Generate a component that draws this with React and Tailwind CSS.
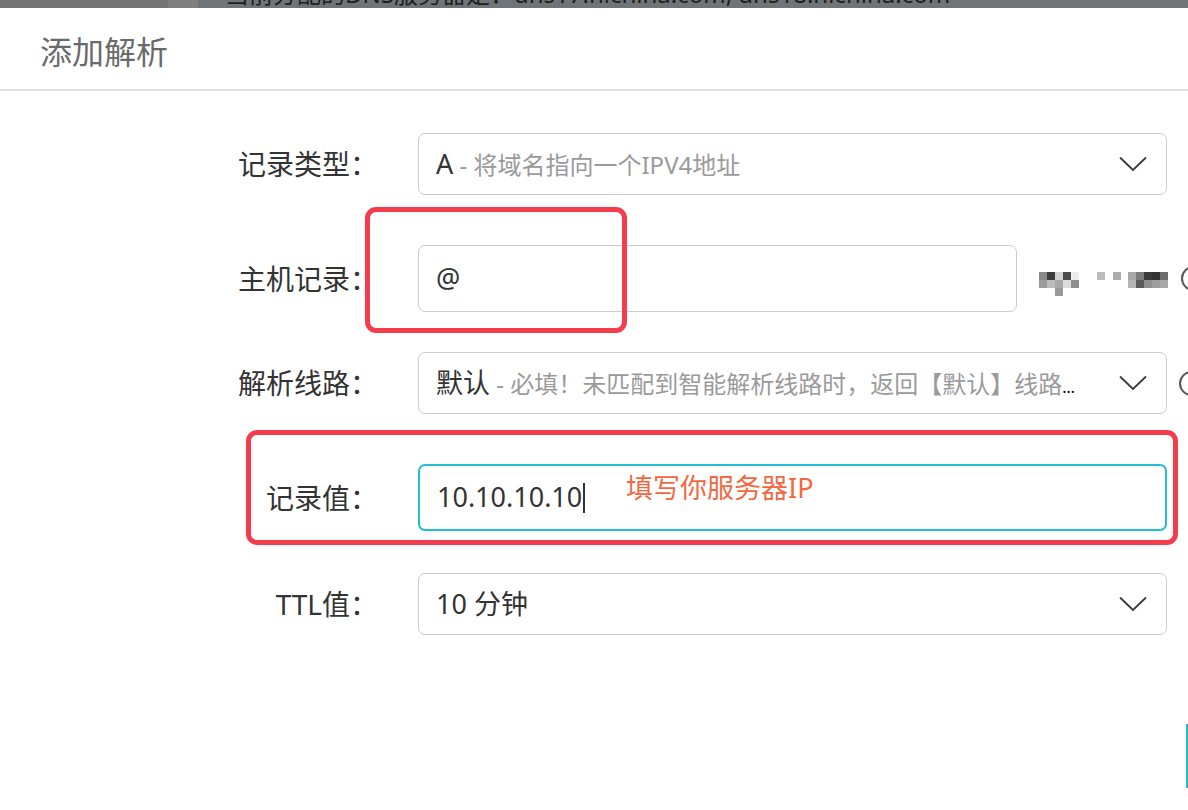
import React from "react";

const FONT = "font-['Noto_Sans','Noto_Sans_CJK_SC',sans-serif]";

function Chevron() {
  return (
    <svg width="28" height="16" viewBox="0 0 28 16" className="shrink-0">
      <polyline points="1,1.5 14,14 27,1.5" fill="none" stroke="#3a3a3a" strokeWidth="1.8" />
    </svg>
  );
}

function Mosaic() {
  const cells = [
    [0, 0, "#8a8a8a"], [8, 0, "#3c3c3c"], [16, 0, "#d2d2d2"], [24, 0, "#4a4a4a"], [32, 0, "#ececec"],
    [0, 8, "#9b9b9b"], [8, 8, "#bdbdbd"], [16, 8, "#a8a8a8"], [24, 8, "#dcdcdc"], [32, 8, "#8e8e8e"],
    [16, 16, "#9a9a9a"],
    [58, 0, "#bcbcbc"], [74, 0, "#ababab"],
    [89, 0, "#a9a9a9"], [97, 0, "#7a7a7a"], [105, 0, "#3a3a3a"], [113, 0, "#333333"], [121, 0, "#6c6c6c"],
    [89, 8, "#b5b5b5"], [97, 8, "#5c5c5c"], [105, 8, "#8f8f8f"], [113, 8, "#9e9e9e"], [121, 8, "#a8a8a8"],
  ];
  return (
    <svg width="130" height="24" viewBox="0 0 130 24" className="shrink-0">
      {cells.map(([x, y, c], i) => (
        <rect key={i} x={x} y={y} width="8" height="8" fill={c} />
      ))}
    </svg>
  );
}

function HelpCircle({ className = "" }) {
  return (
    <div className={"h-[25px] w-[25px] shrink-0 rounded-full border-2 border-[#555] " + className} />
  );
}

function Label({ children }) {
  return (
    <div className="w-[378px] shrink-0 whitespace-nowrap text-right text-[28px] leading-[36px] text-[#333]">{children}</div>
  );
}

export default function App() {
  return (
    <div className={"relative h-[810px] w-[1188px] overflow-hidden bg-white " + FONT}>
      {/* background strip */}
      <div className="flex h-[8px] overflow-hidden">
        <div className="w-[168px] bg-[#737373]" />
        <div className="w-[30px] bg-[#7f7f7f]" />
        <div className="min-w-0 flex-1 bg-[#6f7479] pl-[27px]">
          <div className="-mt-[18px] whitespace-nowrap text-[24px] leading-[24px] text-[#1e1e1e]">
            当前分配的DNS服务器是：dns17.hichina.com, dns18.hichina.com
          </div>
        </div>
      </div>

      {/* header */}
      <div className="flex h-[83px] items-center border-b-2 border-[#e2e2e2] pl-[40px] pt-[7px]">
        <div className="text-[32px] leading-[40px] text-[#6a6a6a]">添加解析</div>
      </div>

      {/* form */}
      <div className="flex flex-col pt-[42px]">
        <div className="flex items-center">
          <Label>记录类型：</Label>
          <div className="ml-[40px] flex h-[62px] w-[749px] shrink-0 items-center justify-between rounded-[7px] border-[1.5px] border-[#cbcbcb] pl-[17px] pr-[19px]">
            <div className="whitespace-nowrap">
              <span className="text-[27px] text-[#333]">A</span>
              <span className="text-[24px] text-[#9a9a9a]"> - 将域名指向一个IPV4地址</span>
            </div>
            <Chevron />
          </div>
        </div>

        <div className="mt-[50px] flex items-center">
          <Label>主机记录：</Label>
          <div className="ml-[40px] flex h-[67px] w-[599px] shrink-0 items-center rounded-[7px] border-[1.5px] border-[#cbcbcb] pl-[17px]">
            <span className="text-[27px] text-[#333]">@</span>
          </div>
          <div className="ml-[22px] mt-[11px] shrink-0">
            <Mosaic />
          </div>
          <HelpCircle className="ml-[12px]" />
        </div>

        <div className="mt-[40px] flex items-center">
          <Label>解析线路：</Label>
          <div className="ml-[40px] flex h-[62px] w-[749px] shrink-0 items-center rounded-[7px] border-[1.5px] border-[#cbcbcb] pl-[17px] pr-[19px]">
            <div className="mr-[24px] min-w-0 flex-1 truncate">
              <span className="text-[27px] text-[#333]">默认</span>
              <span className="text-[24px] text-[#9a9a9a]"> - 必填！未匹配到智能解析线路时，返回【默认】线路解析结果</span>
            </div>
            <Chevron />
          </div>
          <HelpCircle className="ml-[12px]" />
        </div>

        <div className="mt-[50px] flex items-center">
          <Label>记录值：</Label>
          <div className="relative ml-[40px] flex h-[67px] w-[749px] shrink-0 items-center rounded-[7px] border-2 border-[#22bdd8] pl-[17px]">
            <span className="text-[27px] text-[#333]">10.10.10.10</span>
            <span className="ml-[1px] h-[30px] w-[2px] bg-[#333]" />
            <span className="absolute left-[206px] top-[4px] whitespace-nowrap text-[27px] leading-[36px] text-[#f4683f]">
              填写你服务器IP
            </span>
          </div>
        </div>

        <div className="mt-[42px] flex items-center">
          <Label>TTL值：</Label>
          <div className="ml-[40px] flex h-[62px] w-[749px] shrink-0 items-center justify-between rounded-[7px] border-[1.5px] border-[#cbcbcb] pl-[17px] pr-[19px]">
            <span className="text-[27px] text-[#333]">10 分钟</span>
            <Chevron />
          </div>
        </div>
      </div>

      {/* annotations */}
      <div className="pointer-events-none absolute left-[365px] top-[207px] h-[126px] w-[262px] rounded-[11px] border-[5px] border-[#f53c4d]" />
      <div className="pointer-events-none absolute left-[246px] top-[430px] h-[115px] w-[932px] rounded-[11px] border-[5px] border-[#f53c4d]" />
      <div className="absolute left-[1186px] top-[724px] h-[64px] w-[2px] bg-[#22bdd8]" />
    </div>
  );
}
